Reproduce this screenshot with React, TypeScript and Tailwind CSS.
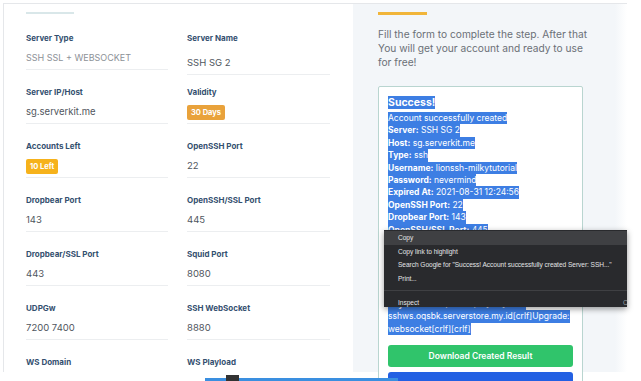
const fields = [
  { label: "Server Type", value: "SSH SSL + WEBSOCKET", muted: true },
  { label: "Server Name", value: "SSH SG 2", shifted: true },
  { label: "Server IP/Host", value: "sg.serverkit.me" },
  { label: "Validity", badge: "30 Days", badgeColor: "bg-[#e9a23b]" },
  { label: "Accounts Left", badge: "10 Left", badgeColor: "bg-[#f6b21b]" },
  { label: "OpenSSH Port", value: "22" },
  { label: "Dropbear Port", value: "143" },
  { label: "OpenSSH/SSL Port", value: "445" },
  { label: "Dropbear/SSL Port", value: "443" },
  { label: "Squid Port", value: "8080" },
  { label: "UDPGw", value: "7200 7400" },
  { label: "SSH WebSocket", value: "8880" },
  { label: "WS Domain", value: "" },
  { label: "WS Playload", value: "" },
];

const result = [
  ["Server:", "SSH SG 2"],
  ["Host:", "sg.serverkit.me"],
  ["Type:", "ssh"],
  ["Username:", "lionssh-milkytutorial"],
  ["Password:", "nevermind"],
  ["Expired At:", "2021-08-31 12:24:56"],
  ["OpenSSH Port:", "22"],
  ["Dropbear Port:", "143"],
  ["OpenSSH/SSL Port:", "445"],
  ["Dropbear/SSL Port:", "443"],
  ["Squid Port:", "8080"],
  ["UDPGW:", "7200 7400"],
  ["SSH WebSocket:", "8880"],
  ["WS Domain:", "sshws.oqsbk.serverstore.my.id"],
  ["Payload:", "GET / HTTP/1.1[crlf]Host:"],
];

const menuItems = [
  { name: "Copy", active: true },
  { name: "Copy link to highlight" },
  { name: 'Search Google for "Success! Account successfully created Server: SSH..."' },
  { name: "Print..." },
];

function Sel({ children }: { children: React.ReactNode }) {
  return (
    <div className="h-[12.4px] leading-[12.4px]">
      <span className="inline-block h-full bg-[#3d7ee3] text-white whitespace-nowrap">{children}</span>
    </div>
  );
}

export default function App() {
  return (
    <div className="relative w-[641px] h-[381px] bg-white overflow-hidden font-['Inter',sans-serif]">
      <div className="ml-[3px] mt-[3px] w-[624px] h-[369px] border-l border-t border-[#e5e7ea] flex">
        {/* left card */}
        <div className="w-[349px] bg-white pl-[22px] pt-[8px]">
          <div className="w-[48px] h-[2px] bg-[#d9e7e9]" />
          <div className="mt-[18px] grid grid-cols-[142px_143px] gap-x-[19px]">
            {fields.map((f) => (
              <div key={f.label} className="h-[54px]">
                <div className="h-[12px] leading-[12px] text-[8px] font-bold text-[#34506f]">{f.label}</div>
                <div className={`${f.shifted ? "mt-[13px]" : "mt-[8px]"} h-[12px] flex items-center`}>
                  {f.badge ? (
                    <span className={`${f.badgeColor} rounded-[2px] px-[4px] h-[15px] leading-[15px] text-[7.5px] font-bold text-white`}>
                      {f.badge}
                    </span>
                  ) : (
                    <span className={f.muted ? "text-[9px] text-[#8d9197]" : "text-[9.5px] text-[#50565e]"}>{f.value}</span>
                  )}
                </div>
                <div className="mt-[5px] h-px bg-[#eceef0]" />
              </div>
            ))}
          </div>
        </div>

        {/* right panel */}
        <div className="w-[262px] bg-[#f3f6f9] pl-[25px] pt-[8px]">
          <div className="w-[49px] h-[3px] bg-[#f1b53a]" />
          <p className="mt-[12px] w-[213px] text-[10.2px] leading-[14px] text-[#6b7077]">
            Fill the form to complete the step. After that You will get your account and ready to use for free!
          </p>
          <div className="mt-[17px] w-[205px] h-[300px] bg-white border border-[#b9d5d0] rounded-[2px] pl-[9px] pt-[9px] pr-[9px] text-[8.5px] overflow-hidden">
            <div className="h-[13px] leading-[13px]">
              <span className="inline-block h-full bg-[#3d7ee3] text-white text-[10.5px] font-bold">Success!</span>
            </div>
            <div className="h-[3px]" />
            <Sel>Account successfully created</Sel>
            {result.map(([k, v]) => (
              <Sel key={k}>
                <b className="font-bold">{k}</b> {v}
              </Sel>
            ))}
            <Sel>sshws.oqsbk.serverstore.my.id[crlf]Upgrade:</Sel>
            <Sel>websocket[crlf][crlf]</Sel>
            <button className="mt-[10px] w-[185px] h-[22px] rounded-[3px] bg-[#30c46b] text-white text-[8.5px] font-semibold">
              Download Created Result
            </button>
            <div className="mt-[5px] w-[185px] h-[22px] rounded-[3px] bg-[#2360e3]" />
          </div>
        </div>
        <div className="flex-1 bg-gradient-to-r from-[#f3f6f9] to-white" />
      </div>

      {/* bottom strip */}
      <div className="flex h-[9px] items-end">
        <div className="ml-[205px] w-[193px] h-[3px] bg-[#3a8fe0] flex">
          <div className="ml-[21px] w-[13px] h-[6px] -mt-[3px] bg-[#333]" />
        </div>
      </div>

      {/* context menu */}
      <div className="absolute left-[384px] top-[230px] w-[243px] h-[77px] bg-[#292a2d] shadow-[0_2px_6px_rgba(0,0,0,0.4)] overflow-hidden pt-[1px] font-['Liberation_Sans',sans-serif] text-[6.6px] tracking-[-0.05px] text-[#e3e4e6]">
        {menuItems.map((item) => (
          <div
            key={item.name}
            className={`h-[13.6px] leading-[13.6px] pl-[14px] whitespace-nowrap ${item.active ? "bg-[#3f4043]" : ""}`}
          >
            {item.name}
          </div>
        ))}
        <div className="my-[5px] h-px bg-[#3f4043]" />
        <div className="h-[13px] leading-[13px] pl-[14px] flex whitespace-nowrap">
          <span>Inspect</span>
          <span className="ml-auto -mr-[36px] w-[40px] text-[#9aa0a6]">Ctrl+Shift+I</span>
        </div>
      </div>
    </div>
  );
}
